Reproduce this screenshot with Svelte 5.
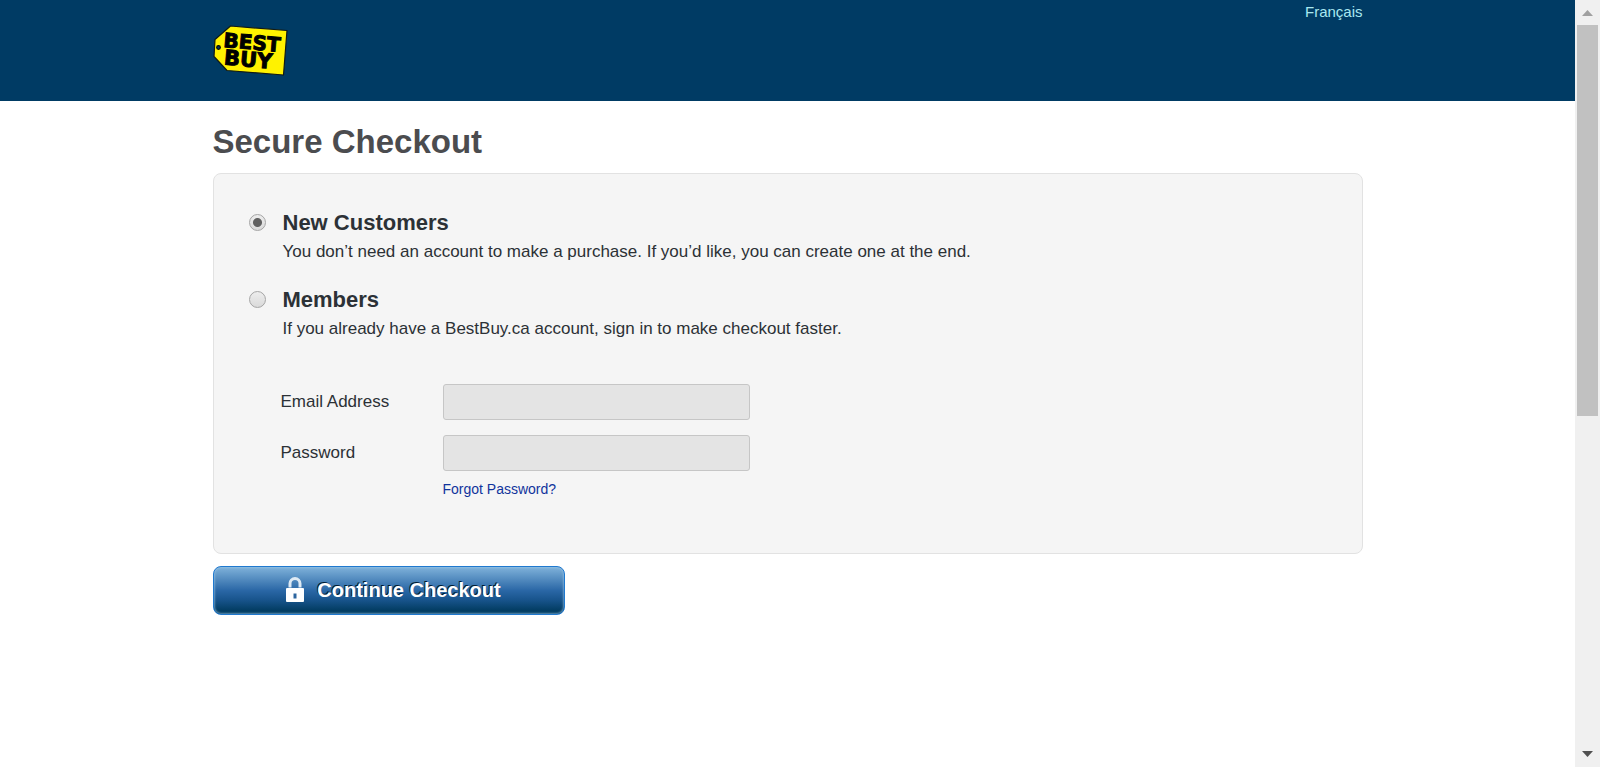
<script>
  let customer = $state('new');
  const options = [
    {
      id: 'new',
      title: 'New Customers',
      text: 'You don’t need an account to make a purchase. If you’d like, you can create one at the end.'
    },
    {
      id: 'member',
      title: 'Members',
      text: 'If you already have a BestBuy.ca account, sign in to make checkout faster.'
    }
  ];
</script>

<div class="screen">
  <div class="page">
    <header>
      <div class="wrap top">
        <a class="logo" href="#home" aria-label="Best Buy">
          <svg width="76" height="52" viewBox="0 0 76 52">
            <path d="M17.500 1L74 5.500L70.500 50L14 45.500L1 31.500L2 14.500Z" fill="#fff200" stroke="#111a16" stroke-width="1.200" stroke-linejoin="round" />
            <circle cx="5.500" cy="22.500" r="1.800" fill="#003b64" stroke="#000" stroke-width="1.200" />
            <g class="word" transform="rotate(5 10 23)">
              <text x="10" y="22" font-size="20">BEST</text>
              <text x="12" y="39.500" font-size="21">BUY</text>
            </g>
          </svg>
        </a>
        <a class="lang" href="#fr" lang="fr">Français</a>
      </div>
    </header>

    <main class="wrap">
      <h1>Secure Checkout</h1>
      <form onsubmit={(e) => e.preventDefault()}>
        <div class="card">
          <div class="options">
            {#each options as o}
              <div class="option">
                <input type="radio" name="customer" id={o.id} value={o.id} bind:group={customer} />
                <div>
                  <h2><label for={o.id}>{o.title}</label></h2>
                  <p>{o.text}</p>
                </div>
              </div>
            {/each}
          </div>
          <div class="fields">
            <label for="email">Email Address</label>
            <input id="email" type="email" disabled={customer === 'new'} />
            <label for="password">Password</label>
            <input id="password" type="password" disabled={customer === 'new'} />
          </div>
          <a class="forgot" href="#forgot">Forgot Password?</a>
        </div>
        <button type="submit">
          <svg width="18" height="28" viewBox="0 0 18 28" aria-hidden="true">
            <path d="M4 10.500V6.500a5 5 0 0 1 10 0V10.500" fill="none" stroke="#dfeaf4" stroke-width="3" />
            <path d="M1 11h16a1 1 0 0 1 1 1V24a1 1 0 0 1-1 1H1a1 1 0 0 1-1-1V12a1 1 0 0 1 1-1Z" fill="#fff" />
            <path d="M7.500 16.500h3v5h-3Z" fill="#2c659f" />
          </svg>
          <span>Continue Checkout</span>
        </button>
      </form>
    </main>
  </div>

  <div class="scrollbar" aria-hidden="true">
    <svg width="25" height="25" viewBox="0 0 25 25"><path d="M7 16L12.500 10L18 16Z" fill="#a0a0a0" /></svg>
    <div class="track"><div class="thumb"></div></div>
    <svg width="25" height="25" viewBox="0 0 25 25"><path d="M7 9L12.500 15L18 9Z" fill="#505050" /></svg>
  </div>
</div>

<style>
  :global(body) {
    margin: 0;
    background: #fff;
  }
  .screen {
    display: flex;
    height: 100vh;
    overflow: hidden;
    font-family: 'Liberation Sans', Arial, sans-serif;
    color: #2c3136;
  }
  .page {
    flex: 1;
    min-width: 0;
    overflow: hidden;
  }
  .wrap {
    max-width: 1150px;
    margin: 0 auto;
  }
  header {
    background: #003b64;
  }
  .top {
    display: flex;
    justify-content: space-between;
    align-items: flex-start;
  }
  .logo {
    display: flex;
    padding: 25px 0 24px;
  }
  .word text {
    font-family: 'DejaVu Sans', sans-serif;
    font-weight: bold;
    fill: #000;
    stroke: #000;
    stroke-width: 1px;
  }
  .lang {
    font-size: 15px;
    line-height: 24px;
    color: #a8e8f0;
    text-decoration: none;
  }
  h1 {
    margin: 0;
    padding: 21px 0 11px;
    font-size: 33px;
    line-height: 40px;
    color: #4b4c4f;
  }
  .card {
    padding: 34px 34px 54px;
    border: 1px solid #e2e2e2;
    border-radius: 8px;
    background: #f5f5f5;
  }
  .options {
    display: grid;
    gap: 19px;
  }
  .option {
    display: flex;
    align-items: flex-start;
    gap: 17px;
  }
  input[type='radio'] {
    appearance: none;
    flex: none;
    width: 17px;
    height: 17px;
    margin: 6px 0 0 1px;
    border: 1px solid #a5a5a5;
    border-radius: 50%;
    background: linear-gradient(#ededed, #dadada);
  }
  input[type='radio']:checked {
    background: radial-gradient(circle, #606060 4px, transparent 5px), linear-gradient(#ededed, #dadada);
  }
  h2 {
    margin: 0;
    font-size: 22px;
    line-height: 30px;
  }
  p {
    margin: 0;
    font-size: 17px;
    line-height: 28px;
  }
  .fields {
    display: grid;
    grid-template-columns: 162px minmax(0, 307px);
    row-gap: 15px;
    align-items: center;
    margin: 41px 0 8px 33px;
    font-size: 17px;
  }
  .fields input {
    box-sizing: border-box;
    width: 100%;
    height: 36px;
    padding: 0 8px;
    border: 1px solid #c6c6c6;
    border-radius: 3px;
    background: #e4e4e4;
    font: inherit;
  }
  .forgot {
    display: block;
    width: fit-content;
    margin-left: 195px;
    font-size: 14px;
    line-height: 20px;
    color: #10349c;
    text-decoration: none;
  }
  button {
    display: flex;
    align-items: center;
    justify-content: center;
    gap: 13px;
    width: 352px;
    height: 49px;
    margin-top: 12px;
    padding: 0 0 0 10px;
    border: 1px solid #2079cf;
    border-radius: 8px;
    background: linear-gradient(#7fb2da, #2a67a6 50%, #18548c 70%, #033d63 92%);
    box-shadow: inset 0 0 2px 1px rgba(150, 195, 230, 0.6);
    font: bold 20px 'Liberation Sans', Arial, sans-serif;
    color: #fff;
    text-shadow: -1px -1px 0 #001c33;
  }
  .scrollbar {
    display: flex;
    flex-direction: column;
    width: 25px;
    background: #f0f0f0;
  }
  .track {
    flex: 1;
    padding: 0 2px;
  }
  .thumb {
    height: 54.5%;
    background: #c1c1c1;
  }
</style>
